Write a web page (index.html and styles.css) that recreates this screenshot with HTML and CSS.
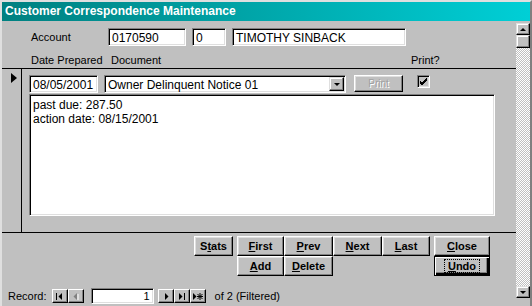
FILE: index.html
```html
<!DOCTYPE html>
<html lang="en">
<head>
    <meta charset="UTF-8">
    <title>Customer Correspondence Maintenance</title>
    <link rel="stylesheet" href="styles.css">
</head>
<body>

    <div class="window">
        <div class="titlebar">Customer Correspondence Maintenance</div>

        <div class="main">
            <div class="form">

                <!-- Form header -->
                <div class="form-header">
                    <div class="account-row">
                        <span class="label account-label">Account</span>
                        <div class="field acct-no">0170590</div>
                        <div class="field acct-sub">0</div>
                        <div class="field acct-name">TIMOTHY SINBACK</div>
                    </div>
                    <div class="column-labels">
                        <span class="label col-date">Date Prepared</span>
                        <span class="label col-doc">Document</span>
                        <span class="label col-print">Print?</span>
                    </div>
                </div>

                <!-- Detail section -->
                <div class="detail">
                    <div class="selector"><span class="current-arrow"></span></div>
                    <div class="record">
                        <div class="record-row">
                            <div class="field date-field">08/05/2001</div>
                            <div class="field combo">
                                <span class="combo-text">Owner Delinquent Notice 01</span>
                                <span class="combo-btn"><span class="down-tri"></span></span>
                            </div>
                            <button class="btn print-btn" disabled>Print</button>
                            <span class="checkbox">
                                <svg width="9" height="9" viewBox="0 0 9 9"><path d="M1 4 L3 6 L8 1 M1 5 L3 7 L8 2 M1 6 L3 8 L8 3" stroke="#000" fill="none"/></svg>
                            </span>
                        </div>
                        <div class="field memo">past due: 287.50<br>action date: 08/15/2001</div>
                    </div>
                </div>

                <!-- Form footer -->
                <div class="form-footer">
                    <button class="btn stats-btn">S<u>t</u>ats</button>
                    <div class="nav-grid">
                        <button class="btn"><u>F</u>irst</button>
                        <button class="btn"><u>P</u>rev</button>
                        <button class="btn"><u>N</u>ext</button>
                        <button class="btn"><u>L</u>ast</button>
                        <button class="btn"><u>A</u>dd</button>
                        <button class="btn"><u>D</u>elete</button>
                    </div>
                    <div class="close-col">
                        <button class="btn"><u>C</u>lose</button>
                        <button class="btn default-btn"><span class="focus-rect"><u>U</u>ndo</span></button>
                    </div>
                </div>

                <!-- Record navigation -->
                <div class="record-nav">
                    <span class="nav-label">Record:</span>
                    <span class="nav-btn">
                        <svg width="8" height="7" viewBox="0 0 8 7"><rect x="0" y="0" width="1" height="7" fill="#000"/><path d="M6 0 L6 7 L2.5 3.5 Z" fill="#000"/></svg>
                    </span>
                    <span class="nav-btn">
                        <svg width="8" height="7" viewBox="0 0 8 7"><path d="M5 0 L5 7 L1.5 3.5 Z" fill="#808080"/><path d="M6 1 L6 8" stroke="#fff"/></svg>
                    </span>
                    <div class="field nav-input">1</div>
                    <span class="nav-btn">
                        <svg width="8" height="7" viewBox="0 0 8 7"><path d="M3 0 L3 7 L6.5 3.5 Z" fill="#000"/></svg>
                    </span>
                    <span class="nav-btn">
                        <svg width="8" height="7" viewBox="0 0 8 7"><path d="M1 0 L1 7 L4.5 3.5 Z" fill="#000"/><rect x="6" y="0" width="1" height="7" fill="#000"/></svg>
                    </span>
                    <span class="nav-btn">
                        <svg width="10" height="7" viewBox="0 0 10 7"><path d="M0 0 L0 7 L3.5 3.5 Z" fill="#000"/><path d="M7 0 L7 7 M4.5 1 L9.5 6 M9.5 1 L4.5 6 M4 3.5 L10 3.5" stroke="#000"/></svg>
                    </span>
                    <span class="nav-of">of 2 (Filtered)</span>
                </div>
            </div>

            <div class="vscroll">
                <span class="sb-btn"><span class="up-tri"></span></span>
                <span class="sb-thumb"></span>
                <span class="sb-track"></span>
                <span class="sb-btn"><span class="down-tri"></span></span>
            </div>
        </div>
    </div>

</body>
</html>
```

FILE: styles.css
```css
/* Access 95 style form */
* {
    box-sizing: border-box;
}

body {
    margin: 0;
    background-color: #c0c0c0;
    font-family: "Liberation Sans", Arial, sans-serif;
    font-size: 12px;
    color: #000;
}

.window {
    width: 532px;
    height: 306px;
    background-color: #c0c0c0;
    border-top: 2px solid #dfdfdf;
    border-left: 2px solid #dfdfdf;
    border-right: 2px solid #808080;
    display: flex;
    flex-direction: column;
}

.titlebar {
    height: 19px;
    padding: 2px 0 0 3px;
    background: linear-gradient(to right, #008080, #00cfd6);
    color: #fff;
    font-weight: bold;
    font-size: 12px;
}

.main {
    flex: 1;
    display: flex;
}

.form {
    width: 514px;
    display: flex;
    flex-direction: column;
}

.label {
    white-space: nowrap;
    font-size: 11px;
}

/* sunken text box */
.field {
    background-color: #fff;
    border: 1px solid;
    border-color: #808080 #fff #fff #808080;
    box-shadow: inset 1px 1px #000, inset -1px -1px #dfdfdf;
    padding: 2px 3px;
    height: 18px;
    line-height: 14px;
    white-space: nowrap;
}

/* raised button */
.btn {
    font-family: "Liberation Sans", Arial, sans-serif;
    font-size: 11px;
    font-weight: bold;
    color: #000;
    background-color: #c0c0c0;
    border: 1px solid;
    border-color: #fff #000 #000 #fff;
    box-shadow: inset -1px -1px #808080, inset 1px 1px #dfdfdf;
    padding: 0;
    height: 20px;
}

/* header */
.form-header {
    height: 48px;
    padding: 7px 0 0 29px;
    border-bottom: 1px solid #000;
}

.account-row {
    display: flex;
    align-items: center;
    gap: 6px;
}

.account-label {
    width: 71px;
}

.acct-no {
    width: 78px;
}

.acct-sub {
    width: 34px;
}

.acct-name {
    width: 174px;
}

.column-labels {
    display: flex;
    margin-top: 8px;
}

.col-date {
    width: 80px;
}

.col-doc {
    width: 300px;
}

.col-print {
    width: 50px;
}

/* detail */
.detail {
    height: 164px;
    display: flex;
    border-bottom: 1px solid #000;
}

.selector {
    width: 20px;
    border-right: 1px solid #000;
    padding: 4px 0 0 9px;
}

.current-arrow {
    display: block;
    width: 0;
    height: 0;
    border-top: 5px solid transparent;
    border-bottom: 5px solid transparent;
    border-left: 6px solid #000;
}

.record {
    padding: 6px 0 0 7px;
}

.record-row {
    display: flex;
    align-items: flex-start;
}

.date-field {
    width: 69px;
    margin-right: 6px;
}

.combo {
    width: 242px;
    display: flex;
    justify-content: space-between;
    padding: 2px 1px 0 3px;
}

.combo-btn {
    width: 15px;
    height: 14px;
    background-color: #c0c0c0;
    border: 1px solid;
    border-color: #dfdfdf #000 #000 #dfdfdf;
    box-shadow: inset -1px -1px #808080, inset 1px 1px #fff;
    display: flex;
    align-items: center;
    justify-content: center;
    margin-top: -1px;
}

.down-tri {
    width: 0;
    height: 0;
    border-left: 3px solid transparent;
    border-right: 3px solid transparent;
    border-top: 3px solid #000;
}

.up-tri {
    width: 0;
    height: 0;
    border-left: 3px solid transparent;
    border-right: 3px solid transparent;
    border-bottom: 3px solid #000;
}

.print-btn {
    width: 49px;
    height: 17px;
    margin-left: 8px;
    font-weight: normal;
    font-size: 10px;
    color: #a0a0a0;
    text-shadow: 1px 1px #fff;
}

.checkbox {
    width: 13px;
    height: 13px;
    margin-left: 14px;
    background-color: #c0c0c0;
    border: 1px solid;
    border-color: #808080 #fff #fff #808080;
    box-shadow: inset 1px 1px #000, inset -1px -1px #dfdfdf;
    display: flex;
    align-items: center;
    justify-content: center;
}

.memo {
    width: 466px;
    height: 122px;
    margin-top: 1px;
    padding: 3px 3px;
    white-space: normal;
}

/* footer */
.form-footer {
    height: 55px;
    display: flex;
    align-items: flex-start;
    gap: 4px;
    padding: 3px 0 0 192px;
}

.stats-btn {
    width: 39px;
}

.nav-grid {
    display: grid;
    grid-template-columns: 47px 49px 49px 48px;
}

.close-col {
    display: flex;
    flex-direction: column;
    width: 56px;
}

.default-btn {
    border: 1px solid #000;
    box-shadow: inset 1px 1px #fff, inset -2px -2px #000, inset -3px -3px #808080;
    display: flex;
    align-items: center;
    justify-content: center;
}

.focus-rect {
    border: 1px dotted #000;
    padding: 0 3px;
    line-height: 12px;
}

/* record navigation */
.record-nav {
    display: flex;
    align-items: center;
    height: 16px;
    padding-left: 6px;
    font-size: 11px;
}

.nav-label {
    margin-right: 5px;
}

.nav-btn {
    width: 16px;
    height: 14px;
    background-color: #c0c0c0;
    border: 1px solid;
    border-color: #fff #000 #000 #fff;
    box-shadow: inset -1px -1px #808080;
    display: flex;
    align-items: center;
    justify-content: center;
}

.nav-input {
    width: 63px;
    height: 16px;
    margin: 0 4px 0 7px;
    padding: 1px 3px;
    text-align: right;
    line-height: 12px;
}

.nav-of {
    margin-left: 9px;
}

/* vertical scrollbar */
.vscroll {
    width: 14px;
    display: flex;
    flex-direction: column;
    padding-top: 2px;
    padding-bottom: 8px;
}

.sb-btn,
.sb-thumb {
    width: 14px;
    height: 12px;
    background-color: #c0c0c0;
    border: 1px solid;
    border-color: #dfdfdf #000 #000 #dfdfdf;
    box-shadow: inset -1px -1px #808080, inset 1px 1px #fff;
    display: flex;
    align-items: center;
    justify-content: center;
}

.sb-thumb {
    height: 13px;
}

.sb-track {
    flex: 1;
    background: repeating-conic-gradient(#c0c0c0 0 25%, #fff 0 50%) 0 0 / 2px 2px;
}
```
